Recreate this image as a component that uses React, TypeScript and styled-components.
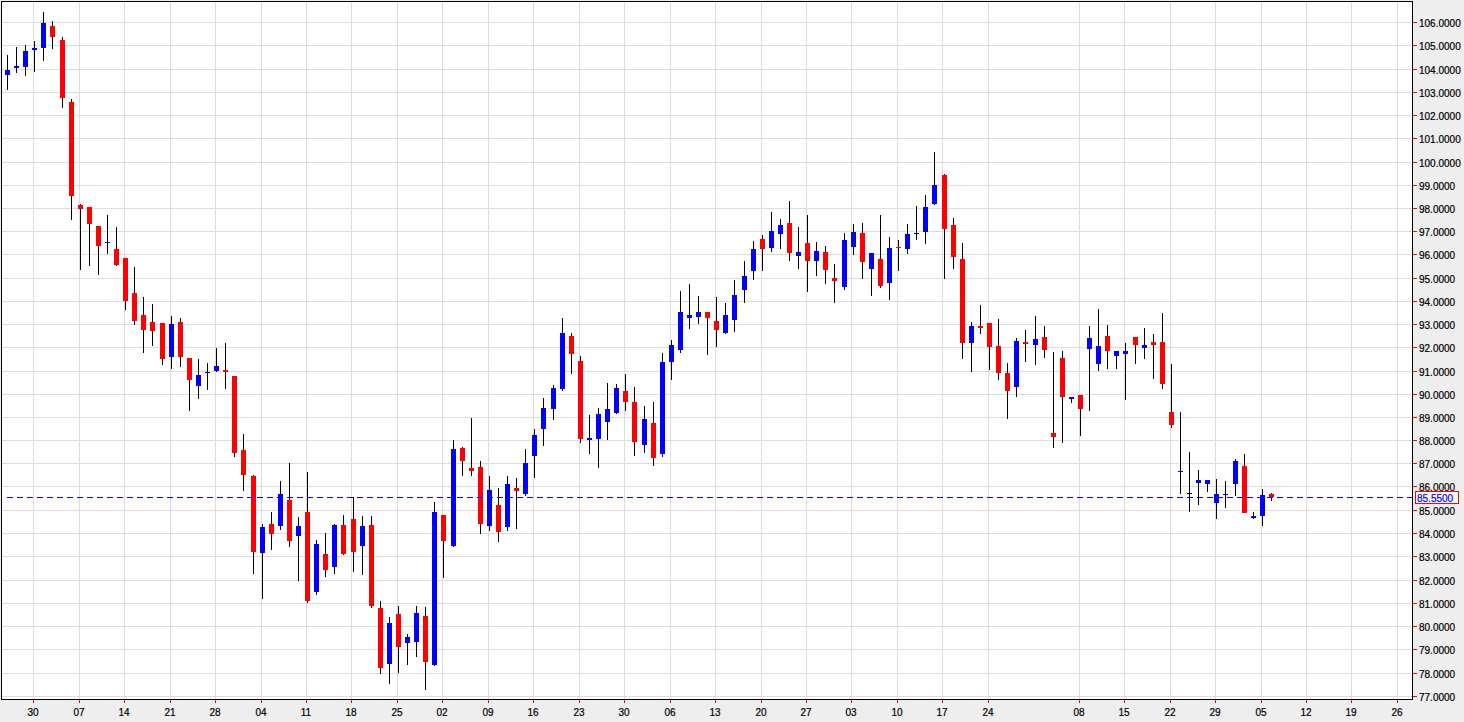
import React from 'react';
import styled, { createGlobalStyle } from 'styled-components';

type Candle = [hi: number, top: number, bot: number, lo: number, color: 'r' | 'b' | 'k'];

// y values are page pixels, one entry per trading day
const CANDLES: Candle[] = [
    [55, 70, 75, 90, 'b'], [47, 66, 68, 73, 'b'], [45, 51, 67, 76, 'b'], [41, 48, 50, 72, 'b'],
    [12, 23, 48, 61, 'b'], [21, 26, 37, 49, 'r'], [37, 40, 98, 108, 'r'], [99, 102, 196, 220, 'r'],
    [204, 205, 209, 270, 'r'], [207, 207, 224, 266, 'r'], [226, 226, 246, 275, 'r'], [215, 242, 243, 254, 'b'],
    [227, 249, 265, 266, 'r'], [258, 258, 301, 310, 'r'], [267, 293, 321, 325, 'r'], [297, 315, 330, 353, 'r'],
    [304, 322, 331, 346, 'r'], [323, 323, 359, 365, 'r'], [316, 324, 357, 369, 'b'], [318, 322, 357, 367, 'r'],
    [358, 358, 380, 411, 'r'], [359, 375, 386, 399, 'b'], [363, 372, 373, 390, 'b'], [348, 366, 371, 372, 'b'],
    [343, 370, 372, 389, 'r'], [376, 376, 453, 457, 'r'], [434, 450, 475, 491, 'r'], [475, 476, 552, 574, 'r'],
    [524, 527, 553, 599, 'b'], [512, 524, 534, 550, 'r'], [481, 494, 526, 530, 'b'], [463, 500, 541, 547, 'r'],
    [517, 526, 536, 581, 'b'], [472, 512, 601, 603, 'r'], [540, 544, 592, 595, 'b'], [533, 554, 570, 577, 'r'],
    [524, 525, 567, 574, 'b'], [515, 525, 554, 555, 'r'], [497, 519, 552, 572, 'r'], [516, 526, 546, 575, 'b'],
    [516, 525, 606, 608, 'r'], [601, 608, 668, 674, 'r'], [617, 623, 664, 684, 'b'], [606, 614, 647, 673, 'r'],
    [634, 637, 643, 665, 'b'], [606, 613, 642, 657, 'b'], [607, 616, 662, 690, 'r'], [502, 512, 665, 666, 'b'],
    [515, 515, 541, 578, 'r'], [440, 449, 546, 547, 'b'], [447, 448, 461, 476, 'r'], [418, 468, 471, 476, 'r'],
    [461, 467, 524, 534, 'r'], [476, 490, 526, 531, 'b'], [488, 505, 532, 542, 'r'], [476, 484, 527, 531, 'b'],
    [478, 488, 491, 529, 'r'], [449, 463, 494, 496, 'b'], [429, 435, 456, 478, 'b'], [398, 408, 429, 446, 'b'],
    [385, 388, 409, 420, 'b'], [318, 333, 389, 391, 'b'], [333, 336, 354, 374, 'r'], [356, 361, 439, 443, 'r'],
    [415, 438, 440, 454, 'b'], [408, 414, 439, 468, 'b'], [383, 409, 422, 440, 'b'], [384, 388, 413, 414, 'b'],
    [374, 391, 402, 411, 'r'], [387, 402, 442, 456, 'r'], [406, 419, 445, 453, 'b'], [402, 423, 458, 466, 'r'],
    [353, 362, 454, 457, 'b'], [340, 345, 362, 380, 'b'], [291, 312, 350, 353, 'b'], [284, 315, 318, 329, 'b'],
    [296, 312, 317, 324, 'b'], [312, 312, 318, 355, 'r'], [297, 321, 330, 347, 'r'], [303, 315, 333, 334, 'b'],
    [280, 295, 320, 332, 'b'], [261, 276, 290, 303, 'b'], [241, 249, 271, 280, 'b'], [235, 239, 249, 271, 'r'],
    [212, 231, 248, 252, 'b'], [219, 225, 234, 249, 'b'], [201, 223, 253, 261, 'r'], [227, 252, 256, 269, 'b'],
    [215, 243, 261, 292, 'r'], [242, 251, 261, 276, 'b'], [246, 252, 270, 284, 'r'], [264, 278, 281, 303, 'r'],
    [233, 240, 287, 290, 'b'], [224, 232, 247, 255, 'b'], [223, 233, 262, 279, 'r'], [253, 253, 269, 296, 'b'],
    [215, 259, 286, 288, 'r'], [237, 248, 283, 300, 'b'], [240, 247, 248, 271, 'r'], [224, 234, 249, 254, 'b'],
    [206, 233, 234, 240, 'k'], [195, 207, 232, 244, 'b'], [152, 185, 204, 205, 'b'], [174, 175, 229, 279, 'r'],
    [218, 225, 257, 269, 'r'], [243, 259, 343, 359, 'r'], [322, 326, 343, 372, 'b'], [305, 326, 328, 334, 'r'],
    [323, 323, 347, 370, 'r'], [319, 346, 373, 380, 'r'], [363, 373, 391, 419, 'r'], [338, 341, 387, 397, 'b'],
    [330, 342, 344, 362, 'r'], [316, 339, 345, 365, 'b'], [326, 337, 350, 358, 'r'], [352, 433, 437, 448, 'r'],
    [351, 358, 397, 443, 'r'], [397, 397, 399, 403, 'b'], [395, 395, 409, 436, 'r'], [326, 338, 349, 411, 'b'],
    [309, 346, 364, 371, 'b'], [325, 336, 351, 369, 'r'], [351, 351, 356, 369, 'b'], [343, 351, 354, 400, 'b'],
    [337, 337, 345, 364, 'r'], [328, 345, 348, 359, 'b'], [334, 342, 345, 379, 'r'], [313, 342, 384, 389, 'r'],
    [364, 412, 425, 428, 'r'], [412, 471, 472, 494, 'b'], [452, 493, 494, 512, 'k'], [470, 480, 483, 505, 'b'],
    [480, 480, 484, 492, 'b'], [479, 494, 503, 519, 'b'], [481, 494, 495, 508, 'b'], [459, 461, 484, 496, 'b'],
    [454, 466, 513, 513, 'r'], [512, 516, 518, 519, 'b'], [489, 495, 516, 526, 'b'], [493, 494, 497, 501, 'r'],
];

const BODY_COLOR = { r: '#ff0000', b: '#0000ff', k: '#000000' };

const GRID_X = [33, 79, 124, 170, 215, 261, 306, 351, 397, 442, 488, 533, 579, 624, 670, 715, 761, 806, 851, 897, 942, 988, 1079, 1124, 1170, 1215, 1261, 1306, 1351, 1397];
const GRID_Y = [22, 45, 69, 92, 115, 138, 162, 185, 208, 231, 254, 278, 301, 324, 347, 371, 394, 417, 440, 463, 486, 510, 533, 556, 580, 603, 626, 649, 673, 696];

const WEEKS: { x: number; label: string }[] = [
    [33, '30'], [79, '07'], [124, '14'], [170, '21'], [215, '28'], [261, '04'], [306, '11'], [351, '18'], [397, '25'], [442, '02'],
    [488, '09'], [533, '16'], [579, '23'], [624, '30'], [670, '06'], [715, '13'], [761, '20'], [806, '27'], [851, '03'], [897, '10'],
    [942, '17'], [988, '24'], [1079, '08'], [1124, '15'], [1170, '22'], [1215, '29'], [1261, '05'], [1306, '12'], [1351, '19'], [1397, '26'],
].map(([x, label]) => ({ x: x as number, label: label as string }));

const LAST_PRICE_Y = 497;
const candleX = (i: number) => Math.floor(7.5 + 9.093 * i);

const GlobalStyle = createGlobalStyle`
    html, body {
        margin: 0;
        background: #eeeeee;
    }
`;

const Page = styled.div`
    display: grid;
    grid-template-columns: 1413px 51px;
    grid-template-rows: 700px 22px;
    width: 1464px;
    height: 722px;
    overflow: hidden;
    font-family: "Liberation Sans", Arial, sans-serif;
    font-size: 10px;
    color: #000;
    -webkit-text-stroke: 0.2px;
`;

const PlotCell = styled.div`
    padding: 1px 0 0 1px;
`;

const Plot = styled.div`
    box-sizing: border-box;
    width: 1412px;
    height: 699px;
    background: #fff;
    border: 1px solid #000;

    & svg {
        display: block;
    }
`;

const PriceAxis = styled.div`
    position: relative;
    display: flex;
    flex-direction: column;
    padding-top: 11px;
`;

const PriceRow = styled.div<{ $height: number }>`
    display: flex;
    flex: none;
    height: ${(p) => p.$height}px;
    gap: 2px;
`;

const PriceTick = styled.span`
    flex: none;
    width: 4px;
    height: 1px;
    margin-top: 11px;
    background: #ff0000;
`;

const PriceText = styled.span`
    padding-top: 1px;
    line-height: 23px;
`;

const PriceTag = styled.div`
    position: absolute;
    left: 2px;
    top: 491px;
    box-sizing: border-box;
    width: 44px;
    height: 13px;
    padding: 1px 0 0 1px;
    border: 1px solid #ff0000;
    background: #fff;
    color: #0000ff;
    line-height: 11px;
`;

const TimeAxis = styled.div`
    display: flex;
    padding-left: 11px;
`;

const WeekCell = styled.div<{ $width: number }>`
    flex: none;
    width: ${(p) => p.$width}px;
`;

const WeekTick = styled.span`
    display: block;
    width: 1px;
    height: 3px;
    margin-left: 22px;
    background: #ff0000;
`;

const WeekLabel = styled.span`
    display: block;
    width: 44px;
    margin-top: 4px;
    text-align: center;
    line-height: 11px;
`;

const Chart: React.FC = () => (
    <svg width={1410} height={697} viewBox="2 2 1410 697" shapeRendering="crispEdges">
        {GRID_X.map((x) => (
            <rect key={x} x={x} y={2} width={1} height={697} fill="#dcdcdc" />
        ))}
        {GRID_Y.map((y) => (
            <rect key={y} x={2} y={y} width={1410} height={1} fill="#dcdcdc" />
        ))}
        {CANDLES.map(([hi, top, bot, lo, color], i) => {
            const cx = candleX(i);
            return (
                <g key={i}>
                    <rect x={cx} y={hi} width={1} height={lo - hi} fill="#000" />
                    <rect x={cx - 2} y={top} width={5} height={bot - top} fill={BODY_COLOR[color]} />
                </g>
            );
        })}
        <line x1={7} x2={1412} y1={LAST_PRICE_Y + 0.5} y2={LAST_PRICE_Y + 0.5} stroke="#0000ff" strokeDasharray="6 4" />
    </svg>
);

const App: React.FC = () => (
    <>
        <GlobalStyle />
        <Page>
            <PlotCell>
                <Plot>
                    <Chart />
                </Plot>
            </PlotCell>
            <PriceAxis>
                {GRID_Y.map((y, i) => (
                    <PriceRow key={y} $height={(GRID_Y[i + 1] ?? y + 23) - y}>
                        <PriceTick />
                        <PriceText>{(106 - i).toFixed(4)}</PriceText>
                    </PriceRow>
                ))}
                <PriceTag>85.5500</PriceTag>
            </PriceAxis>
            <TimeAxis>
                {WEEKS.map((w, i) => (
                    <WeekCell key={w.x} $width={(WEEKS[i + 1]?.x ?? w.x + 45) - w.x}>
                        <WeekTick />
                        <WeekLabel>{w.label}</WeekLabel>
                    </WeekCell>
                ))}
            </TimeAxis>
        </Page>
    </>
);

export default App;
